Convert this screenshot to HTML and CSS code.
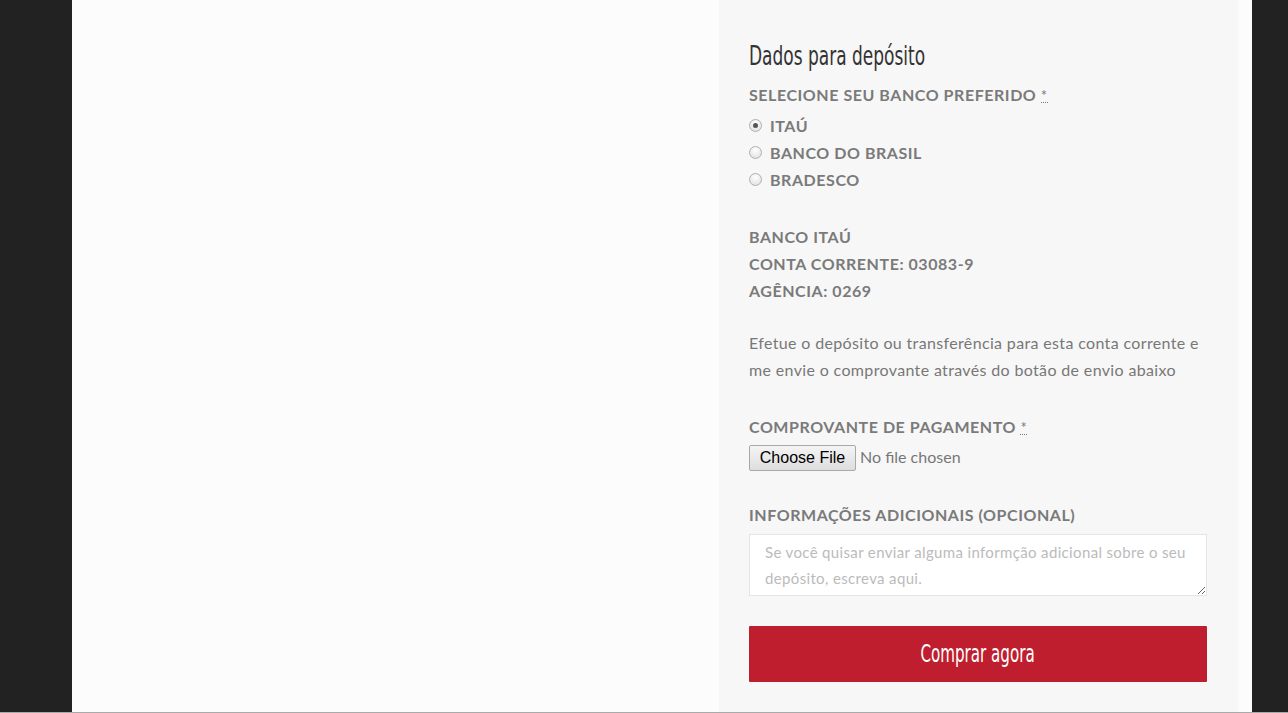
FILE: index.html
```html
<!DOCTYPE html>
<html lang="pt-BR">
<head>
<meta charset="utf-8">
<title>Dados para depósito</title>
<link rel="stylesheet" href="styles.css">
</head>
<body>
<div class="page">
  <div class="left"></div>
  <section class="panel">
    <h3 class="title"><span class="narrow">Dados para depósito</span></h3>
    <div class="field">
      <label class="label">SELECIONE SEU BANCO PREFERIDO <abbr class="req" title="obrigatório">*</abbr></label>
      <ul class="radios">
        <li><input type="radio" name="banco" class="radio" id="b1" checked><label for="b1">ITAÚ</label></li>
        <li><input type="radio" name="banco" class="radio" id="b2"><label for="b2">BANCO DO BRASIL</label></li>
        <li><input type="radio" name="banco" class="radio" id="b3"><label for="b3">BRADESCO</label></li>
      </ul>
    </div>
    <div class="bank">
      <div>BANCO ITAÚ</div>
      <div>CONTA CORRENTE: 03083-9</div>
      <div>AGÊNCIA: 0269</div>
    </div>
    <p class="info">Efetue o depósito ou transferência para esta conta corrente e me envie o comprovante através do botão de envio abaixo</p>
    <div class="field upload">
      <label class="label">COMPROVANTE DE PAGAMENTO <abbr class="req" title="obrigatório">*</abbr></label>
      <input type="file" class="file">
    </div>
    <div class="field notes">
      <label class="label">INFORMAÇÕES ADICIONAIS (OPCIONAL)</label>
      <textarea class="textarea" placeholder="Se você quisar enviar alguma informção adicional sobre o seu depósito, escreva aqui."></textarea>
    </div>
    <button class="buy" type="button"><span class="narrow">Comprar agora</span></button>
  </section>
</div>
</body>
</html>
```
FILE: styles.css
```css
* { box-sizing: border-box; }
html, body { margin: 0; padding: 0; }
body {
  background: #222222;
  height: 713px;
  overflow: hidden;
  border-bottom: 1px solid #aaaaaa;
  font-family: Lato, "Liberation Sans", sans-serif;
  color: #777777;
}
.page {
  margin-left: 72px;
  width: 1180px;
  height: 712px;
  background: #fcfcfc;
  display: grid;
  grid-template-columns: 647px 519px;
}
.panel {
  background: #f7f7f7;
  padding: 40px 31px 0 30px;
}
.narrow {
  display: inline-block;
  transform: scaleX(0.7);
}
.title {
  margin: 0;
  font-family: "DejaVu Sans Condensed", "DejaVu Sans", sans-serif;
  font-weight: 400;
  font-size: 27px;
  line-height: 32px;
  color: #333333;
  white-space: nowrap;
}
.title .narrow { transform-origin: left center; }
.field { display: flex; flex-direction: column; }
.label {
  display: block;
  height: 27px;
  font-weight: 700;
  font-size: 16px;
  line-height: 27px;
  color: #7a7a7a;
  letter-spacing: 0.55px;
  white-space: nowrap;
}
.title + .field { margin-top: 9px; }
.req {
  text-decoration: none;
  border-bottom: 1px dotted #777;
  font-size: 15px;
  font-weight: 400;
  line-height: 14px;
  display: inline-block;
  cursor: help;
}
.radios {
  list-style: none;
  margin: 4px 0 0;
  padding: 0;
}
.radios li {
  display: flex;
  align-items: center;
  height: 27px;
  font-weight: 700;
  font-size: 16px;
  letter-spacing: 0.55px;
  color: #7a7a7a;
}
.radio {
  appearance: none;
  -webkit-appearance: none;
  width: 13px;
  height: 13px;
  margin: 0 8px 0 0;
  border: 1px solid #b0b0b0;
  border-radius: 50%;
  background: radial-gradient(circle at 50% 30%, #ffffff 0%, #dcdcdc 100%);
  position: relative;
}
.radio:checked::after {
  content: "";
  position: absolute;
  left: 3px;
  top: 3px;
  width: 5px;
  height: 5px;
  border-radius: 50%;
  background: #555555;
}
.bank {
  margin-top: 30px;
  font-weight: 700;
  font-size: 16px;
  line-height: 27px;
  letter-spacing: 0.55px;
  color: #7a7a7a;
}
.info {
  margin: 25px 0 0;
  font-size: 16px;
  line-height: 27px;
  letter-spacing: 0.35px;
  color: #777777;
}
.upload { margin-top: 30px; }
.file {
  margin-top: 5px;
  font-family: Lato, sans-serif;
  font-size: 16px;
  color: #777777;
  height: 26px;
}
.file::file-selector-button {
  font-family: "Liberation Sans", Arial, sans-serif;
  font-size: 16px;
  color: #000000;
  height: 26px;
  width: 107px;
  margin-right: 4px;
  border: 1px solid #a9a9a9;
  border-radius: 2px;
  background: linear-gradient(#f4f4f4, #dedede);
  padding: 0 6px;
}
.notes { margin-top: 30px; }
.textarea {
  margin-top: 6px;
  width: 458px;
  height: 62px;
  border: 1px solid #e5e5e5;
  background: #ffffff;
  padding: 4px 15px;
  font-family: Lato, sans-serif;
  font-size: 15px;
  line-height: 26px;
  letter-spacing: 0.35px;
  color: #555;
  resize: vertical;
}
.textarea::placeholder { color: #bbbbbb; }
.buy {
  display: block;
  margin-top: 30px;
  width: 458px;
  height: 56px;
  border: 0;
  border-radius: 1px;
  background: #be1e2d;
  color: #ffffff;
  font-family: "DejaVu Sans Condensed", "DejaVu Sans", sans-serif;
  font-size: 24px;
  white-space: nowrap;
}
```
